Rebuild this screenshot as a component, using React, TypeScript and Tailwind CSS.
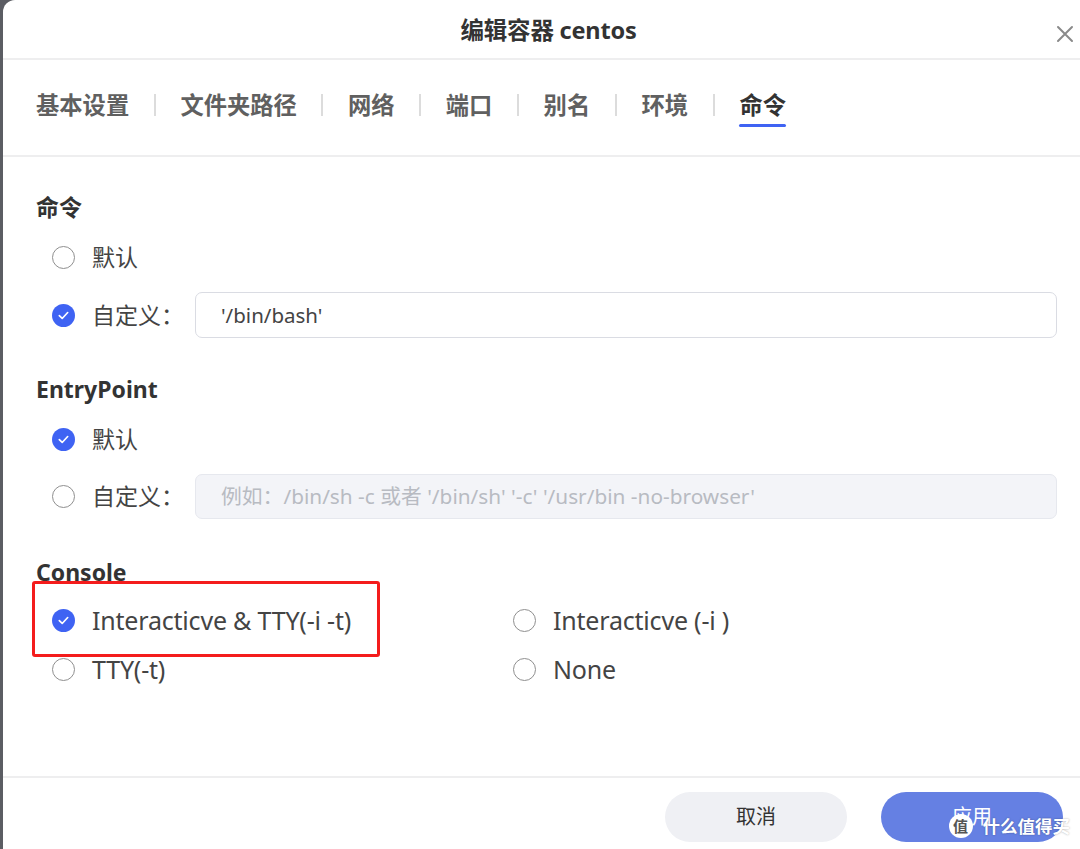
import React from "react";

const FONT = { fontFamily: '"Noto Sans", "Noto Sans CJK SC", sans-serif' };

function Radio({ checked }: { checked?: boolean }) {
  if (checked) {
    return (
      <span className="flex h-[23px] w-[23px] shrink-0 items-center justify-center rounded-full bg-[#3f63f3]">
        <svg width="13" height="13" viewBox="0 0 14 14" fill="none">
          <path d="M2.5 7.2 L5.6 10.2 L11.5 3.8" stroke="white" strokeWidth="1.8" strokeLinecap="round" strokeLinejoin="round" />
        </svg>
      </span>
    );
  }
  return <span className="block h-[23px] w-[23px] shrink-0 rounded-full border-[1.5px] border-[#8f8f8f] bg-white" />;
}

const tabs = ["基本设置", "文件夹路径", "网络", "端口", "别名", "环境", "命令"];

export default function App() {
  return (
    <div className="flex h-[849px] w-[1080px] overflow-hidden bg-[#5b5d63]" style={FONT}>
      <div className="relative ml-[3px] flex flex-1 flex-col rounded-tl-[12px] bg-white text-[#444]">
        {/* header */}
        <div className="relative flex h-[58px] items-center justify-center pl-[14px] pt-[4px]">
          <span className="text-[23.5px] font-bold text-[#333] tracking-[-0.2px]">编辑容器 centos</span>
          <svg className="absolute right-[5px] top-[24px]" width="20" height="20" viewBox="0 0 20 20">
            <path d="M3 3 L17 17 M17 3 L3 17" stroke="#8a8a8a" strokeWidth="2" strokeLinecap="round" />
          </svg>
        </div>
        <div className="h-[2px] bg-[#eeeeef]" />
        {/* tabs */}
        <div className="flex h-[95px] items-start pl-[33px] pt-[29px]">
          {tabs.map((t, i) => (
            <React.Fragment key={t}>
              {i > 0 && <span className="mx-[24.6px] mt-[5px] h-[22px] w-[2px] bg-[#dcdcdc]" />}
              <div className="flex flex-col items-center">
                <span className={`text-[23.3px] font-bold leading-[32px] ${i === tabs.length - 1 ? "text-[#333]" : "text-[#606060]"}`}>{t}</span>
                {i === tabs.length - 1 && <span className="mt-[3px] h-[3px] w-[47px] rounded-full bg-[#3f63f3]" />}
              </div>
            </React.Fragment>
          ))}
        </div>
        <div className="h-[2px] bg-[#eeeeef]" />

        {/* content */}
        <div className="flex flex-1 flex-col pl-[33px] pr-[23px] pt-[30px]">
          <div className="flex h-[40px] items-center text-[23px] font-bold text-[#333]">命令</div>
          <div className="mt-[5px] flex h-[50px] items-center pl-[16px]">
            <Radio />
            <span className="ml-[17px] text-[23px]">默认</span>
          </div>
          <div className="mt-[10px] flex h-[46px] items-center pl-[16px]">
            <Radio checked />
            <span className="ml-[17px] w-[103px] text-[23px]">自定义：</span>
            <div className="flex h-[46px] flex-1 items-center rounded-[7px] border border-[#dadce3] bg-white pl-[25px] text-[20.5px] text-[#444]">
              '/bin/bash'
            </div>
          </div>

          <div className="mt-[31px] flex h-[40px] items-center text-[23px] font-bold text-[#333]">EntryPoint</div>
          <div className="mt-[5px] flex h-[50px] items-center pl-[16px]">
            <Radio checked />
            <span className="ml-[17px] text-[23px]">默认</span>
          </div>
          <div className="mt-[10px] flex h-[45px] items-center pl-[16px]">
            <Radio />
            <span className="ml-[17px] w-[103px] text-[23px]">自定义：</span>
            <div className="flex h-[45px] flex-1 items-center rounded-[7px] border border-[#e6e8ee] bg-[#f3f4f8] pl-[25px] text-[20.8px] text-[#b8bbc2]">
              例如：/bin/sh -c 或者 '/bin/sh' '-c' '/usr/bin -no-browser'
            </div>
          </div>

          <div className="mt-[33px] flex h-[40px] items-center text-[23px] font-bold text-[#333]">Console</div>
          <div className="relative mt-[4px] grid grid-cols-[461px_1fr] pl-[16px]">
            {[
              ["Interacticve & TTY(-i -t)", true],
              ["Interacticve (-i )", false],
              ["TTY(-t)", false],
              ["None", false],
            ].map(([label, c]) => (
              <div key={label as string} className="flex h-[49px] items-center">
                <Radio checked={c as boolean} />
                <span className="ml-[17px] text-[25px] tracking-[-0.2px]">{label as string}</span>
              </div>
            ))}
            <div className="pointer-events-none absolute left-[-4px] top-[-15px] h-[76px] w-[348px] rounded-[3px] border-[3px] border-[#f41c1c]" />
          </div>
        </div>

        {/* footer */}
        <div className="h-[2px] bg-[#eeeeef]" />
        <div className="relative flex h-[71px] items-start justify-end gap-[34px] pr-[17px] pt-[14px]">
          <button className="flex h-[50px] w-[182px] items-center justify-center rounded-full bg-[#eff0f4] text-[20px] text-[#333]">取消</button>
          <button className="flex h-[50px] w-[182px] items-center justify-center rounded-full bg-[#6580e3] text-[20px] text-white">应用</button>
          <div className="pointer-events-none absolute bottom-[10px] right-[10px] flex items-center gap-[10px]">
            <span className="flex h-[24px] w-[24px] items-center justify-center rounded-full bg-white text-[15px] font-bold text-[#555]">值</span>
            <span className="text-[17.5px] font-bold text-white [text-shadow:0_0_2px_rgba(0,0,0,0.35)]">什么值得买</span>
          </div>
        </div>
      </div>
    </div>
  );
}
